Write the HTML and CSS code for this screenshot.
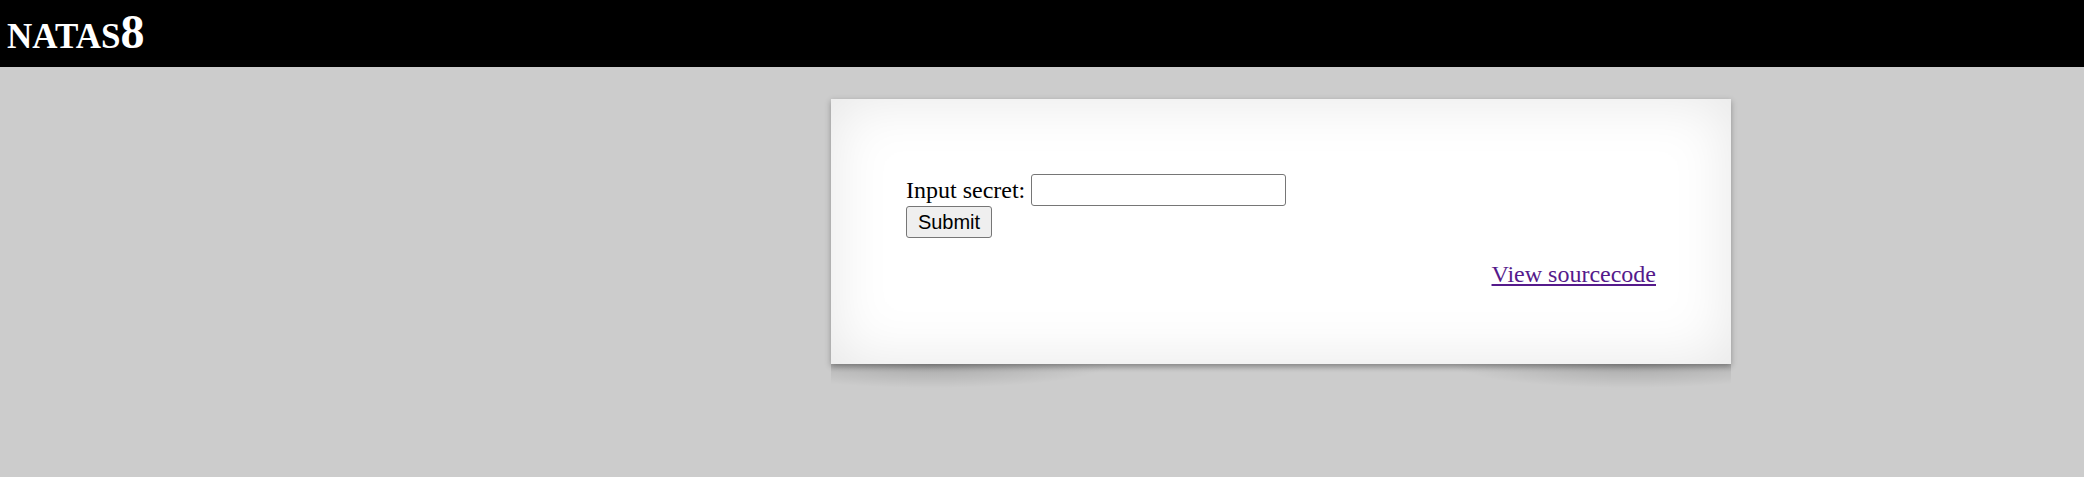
FILE: index.html
```html
<!DOCTYPE html>
<html>
<head>
<meta charset="utf-8">
<title>natas8</title>
<link rel="stylesheet" href="styles.css">
</head>
<body>
<h1 class="title"><span class="sc">NATAS</span>8</h1>
<div class="content">
  <form class="secret-form">
    <div class="row">
      <span class="label">Input secret:</span>
      <input class="secret-input" type="text" name="secret">
    </div>
    <button class="submit" type="button">Submit</button>
  </form>
  <div class="viewsource"><a class="src-link" href="#">View sourcecode</a></div>
</div>
<div class="card-shadow"></div>
</body>
</html>
```
FILE: styles.css
```css
html, body {
  margin: 0;
  padding: 0;
}
body {
  background: #cccccc;
  font-family: "Liberation Serif", "Times New Roman", serif;
  color: #000;
}
.title {
  margin: 0;
  padding: 0 0 4px 7px;
  height: 63px;
  line-height: 63px;
  background: #000;
  color: #fff;
  font-family: "Liberation Serif", "Times New Roman", serif;
  font-weight: bold;
  font-size: 48px;
}
.sc {
  font-size: 35px;
}
.content {
  box-sizing: border-box;
  width: 900px;
  height: 265px;
  margin: 32px 0 0 831px;
  padding: 75px 75px 0 75px;
  background: #fff;
  box-shadow: 0 1.5px 6px rgba(0, 0, 0, 0.3), inset 0 0 60px rgba(0, 0, 0, 0.1);
}
.card-shadow {
  width: 900px;
  height: 28px;
  margin-left: 831px;
  background:
    radial-gradient(ellipse 180px 24px at 100px 0, rgba(0, 0, 0, 0.18), rgba(0, 0, 0, 0) 100%),
    radial-gradient(ellipse 180px 24px at 800px 0, rgba(0, 0, 0, 0.18), rgba(0, 0, 0, 0) 100%),
    linear-gradient(to bottom, rgba(0, 0, 0, 0.1), rgba(0, 0, 0, 0) 8px);
}
.secret-form {
  margin: 0;
  display: flex;
  flex-direction: column;
  align-items: flex-start;
}
.row {
  display: flex;
  align-items: center;
  height: 32px;
  gap: 6px;
}
.label {
  font-size: 24px;
  line-height: 27px;
}
.secret-input {
  box-sizing: border-box;
  width: 255px;
  height: 32px;
  margin: 0;
  padding: 1px 3px;
  border: 1.5px solid #767676;
  border-radius: 3px;
  background: #fff;
  font-size: 20px;
}
.submit {
  box-sizing: border-box;
  width: 86px;
  height: 32px;
  margin: 0;
  padding: 0;
  border: 1.5px solid #767676;
  border-radius: 3px;
  background: #efefef;
  font-family: "Liberation Sans", Arial, sans-serif;
  font-size: 20px;
  color: #000;
}
.viewsource {
  margin-top: 23px;
  text-align: right;
  font-size: 24px;
  line-height: 27px;
}
.src-link {
  color: #551a8b;
  text-decoration: underline;
}
```
